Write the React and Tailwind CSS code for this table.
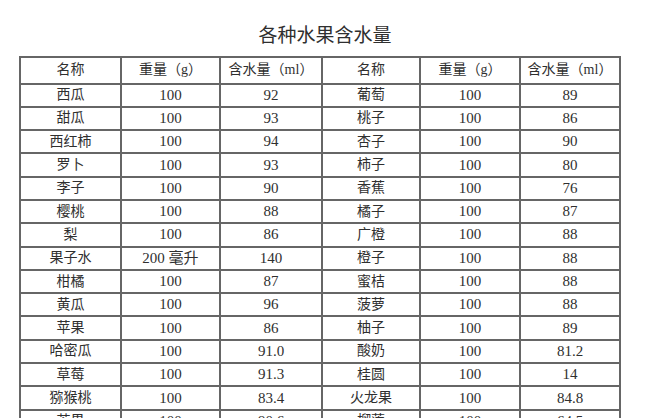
import React from "react";

const rows = [
  ["西瓜", "100", "92", "葡萄", "100", "89"],
  ["甜瓜", "100", "93", "桃子", "100", "86"],
  ["西红柿", "100", "94", "杏子", "100", "90"],
  ["罗卜", "100", "93", "柿子", "100", "80"],
  ["李子", "100", "90", "香蕉", "100", "76"],
  ["樱桃", "100", "88", "橘子", "100", "87"],
  ["梨", "100", "86", "广橙", "100", "88"],
  ["果子水", "200 毫升", "140", "橙子", "100", "88"],
  ["柑橘", "100", "87", "蜜桔", "100", "88"],
  ["黄瓜", "100", "96", "菠萝", "100", "88"],
  ["苹果", "100", "86", "柚子", "100", "89"],
  ["哈密瓜", "100", "91.0", "酸奶", "100", "81.2"],
  ["草莓", "100", "91.3", "桂圆", "100", "14"],
  ["猕猴桃", "100", "83.4", "火龙果", "100", "84.8"],
  ["芒果", "100", "90.6", "榴莲", "100", "64.5"],
];

const header = ["名称", "重量（g）", "含水量（ml）", "名称", "重量（g）", "含水量（ml）"];

const font = { fontFamily: '"Liberation Serif", "Noto Sans CJK SC", serif' };

export default function App() {
  return (
    <div
      className="w-[670px] h-[418px] overflow-hidden bg-white text-[#2f2f2f]"
      style={font}
    >
      <div className="pt-[22px] w-[650px] text-center text-[19px] leading-[28px] h-[50px]">
        各种水果含水量
      </div>
      <div className="ml-[19px] mt-[6px] w-[602px] grid grid-cols-[99px_97px_100px_96px_98px_98px] grid-rows-[24.5px] auto-rows-[21.3px] gap-[2px] p-[2px] bg-[#666]">
        {header.map((h, i) => (
          <div key={"h" + i} className="bg-white flex items-center justify-center text-[14px] leading-none">
            {h}
          </div>
        ))}
        {rows.map((r, ri) =>
          r.map((c, ci) => {
            const isName = ci % 3 === 0;
            return (
              <div
                key={ri + "-" + ci}
                className={
                  "bg-white flex items-center justify-center leading-none " +
                  (isName ? "text-[14px]" : "text-[15px]")
                }
              >
                {c}
              </div>
            );
          })
        )}
      </div>
    </div>
  );
}
